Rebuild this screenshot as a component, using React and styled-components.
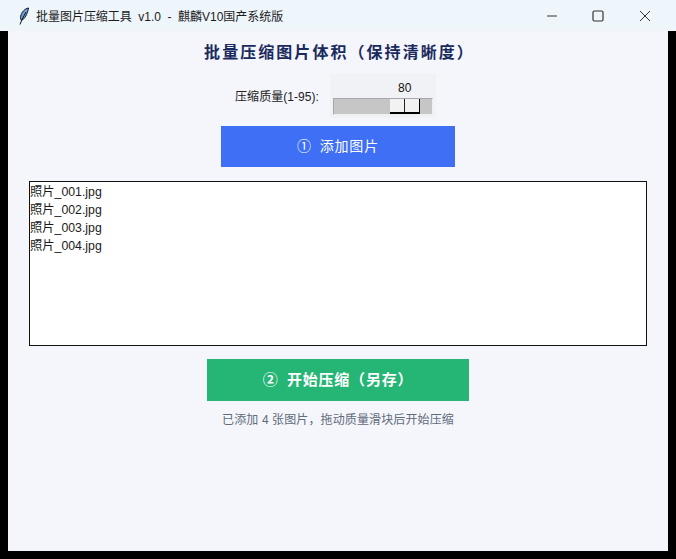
import React from 'react';
import styled, { createGlobalStyle } from 'styled-components';

const files = ['照片_001.jpg', '照片_002.jpg', '照片_003.jpg', '照片_004.jpg'];

const GlobalStyle = createGlobalStyle`
  html, body {
    margin: 0;
    height: 100%;
    background: #000;
  }
  body {
    font-family: "Liberation Sans", "Noto Sans CJK SC", sans-serif;
  }
`;

const Shell = styled.div`
  width: 676px;
  height: 559px;
  display: flex;
  flex-direction: column;
  background: #000;
  overflow: hidden;
`;

const TitleBar = styled.div`
  height: 31px;
  flex: none;
  display: flex;
  align-items: center;
  padding: 0 8px 0 18px;
  background: #eef5fb;
`;

const TitleText = styled.span`
  margin-left: 6px;
  font-size: 12px;
  letter-spacing: -0.03px;
  color: #1c1c1c;
  white-space: pre;
`;

const WindowControls = styled.div`
  margin-left: auto;
  display: flex;
`;

const ControlButton = styled.div`
  width: 46.500px;
  height: 31px;
  display: flex;
  align-items: center;
  justify-content: center;
`;

const Body = styled.main`
  flex: none;
  width: 660px;
  height: 520px;
  margin-left: 8px;
  display: flex;
  flex-direction: column;
  align-items: center;
  background: #f4f6fc;
`;

const Heading = styled.h1`
  margin: 9px 0 0;
  padding-left: 3px;
  height: 22px;
  font-size: 16px;
  line-height: 22px;
  font-weight: 700;
  letter-spacing: 2.050px;
  color: #1b2a5c;
  font-family: "Noto Sans CJK SC", sans-serif;
`;

const QualityRow = styled.div`
  margin-top: 12px;
  margin-right: 5px;
  display: flex;
  align-items: flex-end;
  gap: 11px;
`;

const QualityLabel = styled.label`
  padding-bottom: 12px;
  font-size: 12px;
  line-height: 18px;
  letter-spacing: 0.05px;
  color: #222;
`;

const ScaleBox = styled.div`
  width: 100px;
  height: 38px;
  padding: 3px;
  display: flex;
  flex-direction: column;
  background: #f1f2f5;
`;

const ScaleValue = styled.div`
  height: 21px;
  padding-left: 65px;
  font-size: 12px;
  line-height: 22px;
  color: #111;
`;

const Trough = styled.div`
  height: 17px;
  padding-left: 56px;
  box-sizing: border-box;
  background: #c6c6c6;
  border-top: 1px solid #a8a8a8;
  border-left: 1px solid #a8a8a8;
  border-bottom: 1px solid #eeeeee;
  border-right: 1px solid #eeeeee;
`;

const Thumb = styled.div`
  position: relative;
  width: 30px;
  height: 15px;
  box-sizing: border-box;
  background: #f2f2f2;
  border-right: 1px solid #000;
  border-bottom: 2px solid #000;

  &::after {
    content: "";
    position: absolute;
    left: 14px;
    top: 0;
    bottom: 0;
    border-left: 1px solid #222;
  }
`;

const ActionButton = styled.button`
  display: block;
  padding: 0 0 ${({ $bold }) => ($bold ? 4 : 3)}px;
  border: 0;
  height: ${({ $h }) => $h}px;
  width: ${({ $w }) => $w}px;
  margin-top: ${({ $top }) => $top}px;
  background: ${({ $bg }) => $bg};
  color: #fff;
  font-family: "Noto Sans CJK SC", sans-serif;
  font-size: ${({ $bold }) => ($bold ? 15 : 14)}px;
  font-weight: ${({ $bold }) => ($bold ? 700 : 400)};
  letter-spacing: ${({ $bold }) => ($bold ? '0.8px' : '0.8px')};
  white-space: pre;
`;

const FileList = styled.ul`
  list-style: none;
  margin: 14px 0 0;
  padding: 1px 0 0;
  width: 618px;
  height: 165px;
  box-sizing: border-box;
  background: #fff;
  border: 1px solid #111;
`;

const FileRow = styled.li`
  height: 18px;
  font-size: 12.300px;
  line-height: 18px;
  color: #1a1a1a;
`;

const Status = styled.p`
  margin: 10px 0 0;
  font-size: 12px;
  line-height: 18px;
  letter-spacing: 0.12px;
  color: #5f6b7a;
`;

function FeatherIcon() {
  return (
    <svg width="12" height="18" viewBox="0 0 12 18">
      <path d="M10.500 1C7 1.500 3.500 5 2.600 9.500c-.3 1.600.1 3 .7 3.800C6.500 12.500 9.500 7 10.500 1z" fill="#6f9fdc" stroke="#10141c" strokeWidth="1" />
      <path d="M8 5 4.200 12 2 17.500" fill="none" stroke="#10141c" strokeWidth="1" />
    </svg>
  );
}

function WindowIcons() {
  return (
    <WindowControls>
      <ControlButton>
        <svg width="12" height="12" viewBox="0 0 12 12"><path d="M1 6h10" stroke="#333" strokeWidth="1" /></svg>
      </ControlButton>
      <ControlButton>
        <svg width="12" height="12" viewBox="0 0 12 12"><rect x="1" y="1" width="10" height="10" rx="1.500" fill="none" stroke="#333" strokeWidth="1.200" /></svg>
      </ControlButton>
      <ControlButton>
        <svg width="12" height="12" viewBox="0 0 12 12"><path d="M1 1l10 10M11 1 1 11" stroke="#333" strokeWidth="1" /></svg>
      </ControlButton>
    </WindowControls>
  );
}

export default function App() {
  return (
    <Shell>
      <GlobalStyle />
      <TitleBar>
        <FeatherIcon />
        <TitleText>批量图片压缩工具  v1.0  -  麒麟V10国产系统版</TitleText>
        <WindowIcons />
      </TitleBar>
      <Body>
        <Heading>批量压缩图片体积（保持清晰度）</Heading>
        <QualityRow>
          <QualityLabel>压缩质量(1-95):</QualityLabel>
          <ScaleBox>
            <ScaleValue>80</ScaleValue>
            <Trough>
              <Thumb />
            </Trough>
          </ScaleBox>
        </QualityRow>
        <ActionButton $w={234} $h={41} $top={8} $bg="#3e6ff5">①  添加图片</ActionButton>
        <FileList>
          {files.map((name) => (
            <FileRow key={name}>{name}</FileRow>
          ))}
        </FileList>
        <ActionButton $w={262} $h={42} $top={13} $bg="#25b574" $bold>②  开始压缩（另存）</ActionButton>
        <Status>已添加 4 张图片，拖动质量滑块后开始压缩</Status>
      </Body>
    </Shell>
  );
}
